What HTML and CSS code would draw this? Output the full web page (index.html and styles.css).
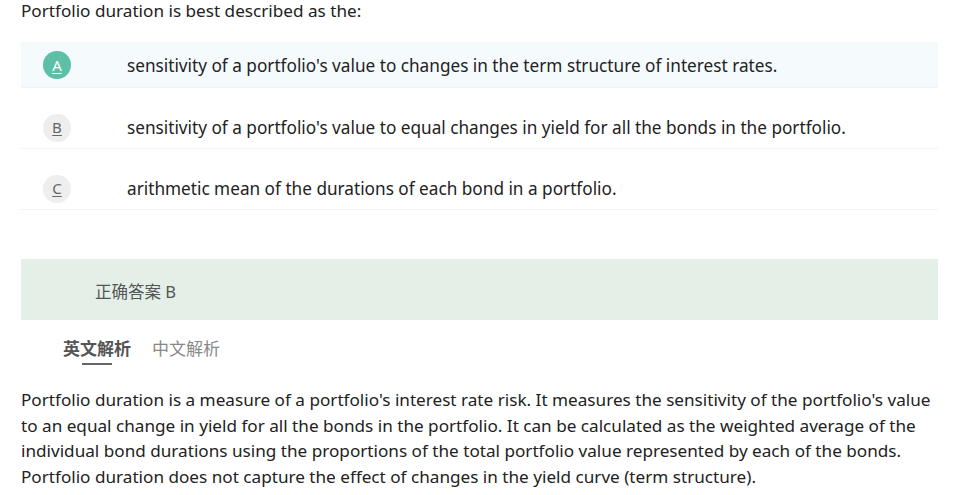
FILE: index.html
```html
<!DOCTYPE html>
<html lang="en">
<head>
<meta charset="utf-8">
<title>Question</title>
<link rel="stylesheet" href="styles.css">
</head>
<body>
<div class="page">
  <div class="question">Portfolio duration is best described as the:</div>
  <div class="options">
    <div class="option option-selected">
      <span class="badge badge-active"><span class="letter">A</span></span>
      <span class="option-text">sensitivity of a portfolio's value to changes in the term structure of interest rates.</span>
    </div>
    <div class="option">
      <span class="badge"><span class="letter">B</span></span>
      <span class="option-text">sensitivity of a portfolio's value to equal changes in yield for all the bonds in the portfolio.</span>
    </div>
    <div class="option">
      <span class="badge"><span class="letter">C</span></span>
      <span class="option-text">arithmetic mean of the durations of each bond in a portfolio.</span>
    </div>
  </div>
  <div class="answer">正确答案 B</div>
  <div class="tabs">
    <span class="tab tab-active">英文解析</span>
    <span class="tab">中文解析</span>
  </div>
  <p class="explanation">Portfolio duration is a measure of a portfolio's interest rate risk. It measures the sensitivity of the portfolio's value to an equal change in yield for all the bonds in the portfolio. It can be calculated as the weighted average of the individual bond durations using the proportions of the total portfolio value represented by each of the bonds. Portfolio duration does not capture the effect of changes in the yield curve (term structure).</p>
</div>
</body>
</html>
```

FILE: styles.css
```css
html, body {
  margin: 0;
  padding: 0;
  background: #ffffff;
}
body {
  font-family: "Noto Sans", "Noto Sans CJK SC", sans-serif;
  color: #222222;
}
.page {
  width: 917px;
  margin-left: 21px;
}
.question {
  font-size: 17.15px;
  line-height: 22px;
  color: #222;
}
.options {
  margin-top: 20px;
}
.option {
  display: flex;
  align-items: center;
  height: 61px;
  padding-top: 19px;
  border-bottom: 1px solid #f1f3f4;
  box-sizing: border-box;
}
.option-selected {
  height: 46px;
  padding-top: 1px;
  background: #f5fafd;
  border-bottom: 1px solid #eef3f6;
}
.badge {
  width: 28px;
  height: 28px;
  border-radius: 50%;
  background: #eeeeee;
  display: flex;
  align-items: center;
  justify-content: center;
  margin-left: 22px;
  margin-right: 56px;
  color: #666;
  font-size: 15px;
}
.badge-active {
  background: #5cbfa6;
  color: #ffffff;
}
.letter {
  text-decoration: underline;
  text-underline-offset: 2px;
  line-height: 1;
}
.option-text {
  font-size: 17.2px;
  color: #222;
}
.answer {
  margin-top: 49px;
  height: 61px;
  box-sizing: border-box;
  padding-top: 3px;
  background: #e3efe7;
  display: flex;
  align-items: center;
  padding-left: 74px;
  font-size: 16.5px;
  color: #555;
}
.tabs {
  display: flex;
  gap: 21px;
  padding-left: 42px;
  margin-top: 18px;
}
.tab {
  font-size: 17px;
  line-height: 22px;
  color: #888;
  position: relative;
}
.tab-active {
  color: #555;
  font-weight: 700;
}
.tab-active::after {
  content: "";
  position: absolute;
  left: 19px;
  top: 25px;
  width: 30px;
  height: 2px;
  background: #666;
}
.explanation {
  margin: 27px 0 0 0;
  font-size: 17.15px;
  line-height: 25.5px;
  color: #222;
}
```
